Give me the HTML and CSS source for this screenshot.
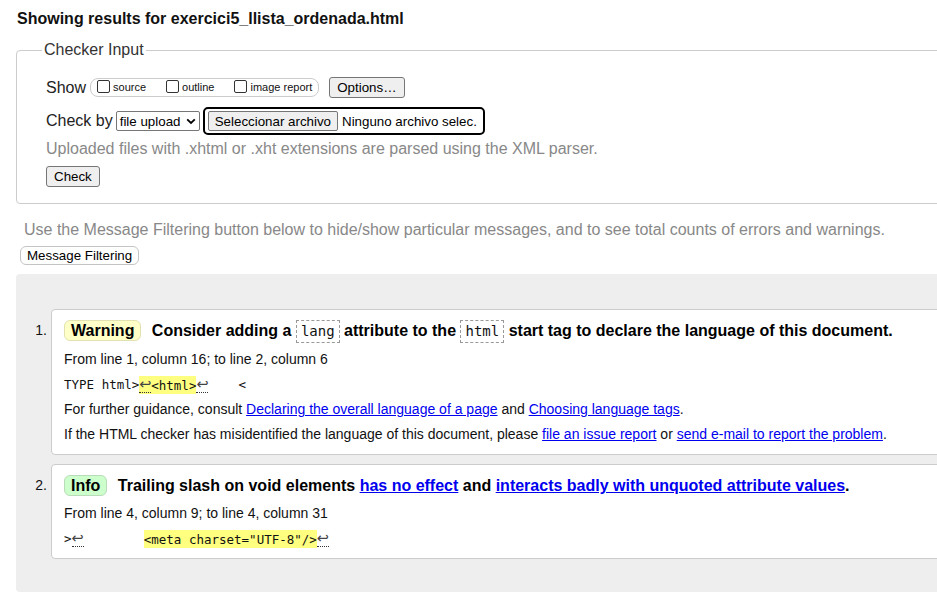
FILE: index.html
```html
<!DOCTYPE html>
<html lang="en">
<head>
<meta charset="utf-8">
<title>Showing results for exercici5_llista_ordenada.html</title>
<link rel="stylesheet" href="styles.css">
</head>
<body>
<main class="page">
  <h2 class="title">Showing results for exercici5_llista_ordenada.html</h2>

  <fieldset class="checker">
    <legend class="checker-legend">Checker Input</legend>

    <div class="row row-show">
      <span class="row-label">Show</span>
      <span class="opts">
        <label class="opt"><span class="cb"></span>source</label>
        <label class="opt"><span class="cb"></span>outline</label>
        <label class="opt"><span class="cb"></span>image report</label>
      </span>
      <button class="btn btn-options" type="button">Options…</button>
    </div>

    <div class="row row-checkby">
      <span class="row-label">Check by</span>
      <span class="select">file upload<svg class="chev" width="10" height="7" viewBox="0 0 10 7"><path d="M1.2 1.3 L5 5 L8.8 1.3" fill="none" stroke="#000" stroke-width="1.8"/></svg></span>
      <span class="file">
        <button class="btn btn-file" type="button">Seleccionar archivo</button>
        <span class="file-name">Ninguno archivo selec.</span>
      </span>
    </div>

    <p class="hint">Uploaded files with .xhtml or .xht extensions are parsed using the XML parser.</p>

    <div class="row row-check">
      <button class="btn btn-check" type="button">Check</button>
    </div>
  </fieldset>

  <p class="filter-hint">Use the Message Filtering button below to hide/show particular messages, and to see total counts of errors and warnings.</p>
  <button class="btn-filter" type="button">Message Filtering</button>

  <section class="results">
    <ol class="messages">
      <li class="msg">
        <span class="num">1.</span>
        <div class="box">
          <p class="msg-head"><span class="badge badge-warning">Warning</span> Consider adding a <code class="kw">lang</code> attribute to the <code class="kw">html</code> start tag to declare the language of this document.</p>
          <p class="loc">From line 1, column 16; to line 2, column 6</p>
          <p class="extract">TYPE html&gt;<mark class="hl"><span class="lf">↩</span>&lt;html&gt;</mark><span class="lf">↩</span>    &lt;</p>
          <p class="loc">For further guidance, consult <a href="#">Declaring the overall language of a page</a> and <a href="#">Choosing language tags</a>.</p>
          <p class="loc">If the HTML checker has misidentified the language of this document, please <a href="#">file an issue report</a> or <a href="#">send e-mail to report the problem</a>.</p>
        </div>
      </li>
      <li class="msg">
        <span class="num">2.</span>
        <div class="box">
          <p class="msg-head"><span class="badge badge-info">Info</span> Trailing slash on void elements <a href="#">has no effect</a> and <a href="#">interacts badly with unquoted attribute values</a>.</p>
          <p class="loc">From line 4, column 9; to line 4, column 31</p>
          <p class="extract">&gt;<span class="lf">↩</span>        <mark class="hl">&lt;meta charset="UTF-8"/&gt;</mark><span class="lf">↩</span></p>
        </div>
      </li>
    </ol>
  </section>
</main>
</body>
</html>
```

FILE: styles.css
```css
html, body {
  margin: 0;
  padding: 0;
  overflow: hidden;
  background: #fff;
}

body {
  font-family: "Liberation Sans", Arial, sans-serif;
  color: #000;
}

.page {
  width: 1000px;
  padding: 0 0 0 16px;
}

.title {
  margin: 10px 0 0 1px;
  font-size: 16px;
  line-height: 18px;
  font-weight: bold;
  color: #111;
}

/* ---------- checker input ---------- */
.checker {
  margin: 13px 0 0;
  padding: 0 28px 16px 29px;
  border: 1px solid #ccc;
  border-radius: 4px;
  min-width: 0;
}

.checker-legend {
  padding: 0 2px;
  margin-left: -4px;
  font-size: 16px;
  line-height: 18px;
  color: #333;
}

.row {
  display: flex;
  align-items: center;
}

.row-label {
  font-size: 16px;
  line-height: 18px;
  color: #222;
}

.row-show {
  margin-top: 18px;
  height: 21px;
}

.opts {
  display: flex;
  align-items: center;
  height: 17px;
  margin-left: 4px;
  padding: 0 6px;
  border: 1px solid #ccc;
  border-radius: 8px;
}

.opt {
  display: flex;
  align-items: center;
  font-size: 11px;
  line-height: 13px;
  color: #111;
  margin-right: 20px;
}

.opt:last-child {
  margin-right: 0;
}

.cb {
  width: 11px;
  height: 11px;
  border: 1px solid #333;
  border-radius: 2px;
  margin: 0 3px 3px 0;
  background: #fff;
}

.btn {
  font-family: "Liberation Sans", Arial, sans-serif;
  font-size: 13.33px;
  line-height: 15px;
  color: #000;
  background: #efefef;
  border: 1px solid #767676;
  border-radius: 3px;
  padding: 2px 7px 2px;
  margin: 0;
  height: 21px;
}

.btn-options {
  margin-left: 10px;
}

.row-checkby {
  margin-top: 9px;
  height: 28px;
}

.select {
  display: flex;
  align-items: center;
  box-sizing: border-box;
  width: 84px;
  height: 20px;
  margin-left: 3px;
  padding: 0 3px 0 3px;
  border: 1px solid #767676;
  border-radius: 2px;
  font-size: 13.33px;
  color: #000;
  justify-content: space-between;
}

.chev {
  margin-top: 1px;
}

.file {
  display: flex;
  align-items: center;
  box-sizing: border-box;
  height: 28px;
  width: 282px;
  margin-left: 3px;
  padding: 0 5px 0 3px;
  border: 2px solid #000;
  border-radius: 5px;
}

.btn-file {
  height: 20px;
  padding: 1px 6px;
  border-radius: 2px;
}

.file-name {
  margin-left: 4px;
  font-size: 13.33px;
  color: #000;
}

.hint {
  margin: 5px 0 0;
  font-size: 16px;
  line-height: 18px;
  color: #888;
}

.row-check {
  margin-top: 8px;
}

/* ---------- filter ---------- */
.filter-hint {
  margin: 17px 0 0 8px;
  font-size: 16px;
  line-height: 18px;
  color: #888;
  white-space: nowrap;
}

.btn-filter {
  display: block;
  margin: 7px 0 0 4px;
  height: 19px;
  padding: 0 6px;
  font-family: "Liberation Sans", Arial, sans-serif;
  font-size: 13.33px;
  line-height: 15px;
  color: #000;
  background: #fff;
  border: 1px solid #c4c4c4;
  border-radius: 6px;
}

/* ---------- results ---------- */
.results {
  margin-top: 9px;
  padding: 35px 0 33px;
  background: #eee;
  border-radius: 4px;
}

.messages {
  list-style: none;
  margin: 0;
  padding: 0;
}

.msg {
  display: grid;
  grid-template-columns: 35px 1fr;
}

.msg + .msg {
  margin-top: 9px;
}

.num {
  text-align: right;
  padding: 10px 4px 0 0;
  font-size: 14px;
  line-height: 23px;
  color: #111;
}

.box {
  background: #fff;
  border: 1px solid #ccc;
  border-radius: 4px;
  padding: 9px 12px 11px;
}

.msg-head {
  margin: 0;
  font-size: 16px;
  line-height: 23px;
  font-weight: bold;
  color: #000;
  white-space: nowrap;
}

.badge {
  display: inline-block;
  line-height: 19px;
  padding: 0 6px;
  border-radius: 6px;
  margin-right: 6px;
}

.badge-warning {
  background: #ffffc8;
  border: 1px solid #e2e2b0;
}

.badge-info {
  background: #ccffcc;
  border: 1px solid #b8dcb8;
}

.kw {
  display: inline-block;
  font-family: "DejaVu Sans Mono", monospace;
  font-size: 14px;
  font-weight: normal;
  line-height: 21px;
  padding: 0 4px;
  border: 1px dashed #999;
  color: #111;
}

.loc {
  margin: 8px 0 0;
  font-size: 14px;
  line-height: 17px;
  color: #111;
  white-space: nowrap;
}

.extract {
  margin: 8px 0 0;
  font-family: "DejaVu Sans Mono", monospace;
  font-size: 12.5px;
  line-height: 17px;
  color: #111;
  white-space: pre;
}

.hl {
  background: #ffff80;
  color: #111;
  padding: 1.5px 0;
}

.lf {
  display: inline-block;
  width: 12px;
  font-family: "DejaVu Sans", sans-serif;
  font-size: 14.5px;
  line-height: 15px;
  color: #444;
  text-align: center;
  border-bottom: 1px dotted #333;
}

a {
  color: #00e;
  text-decoration: underline;
}
```
